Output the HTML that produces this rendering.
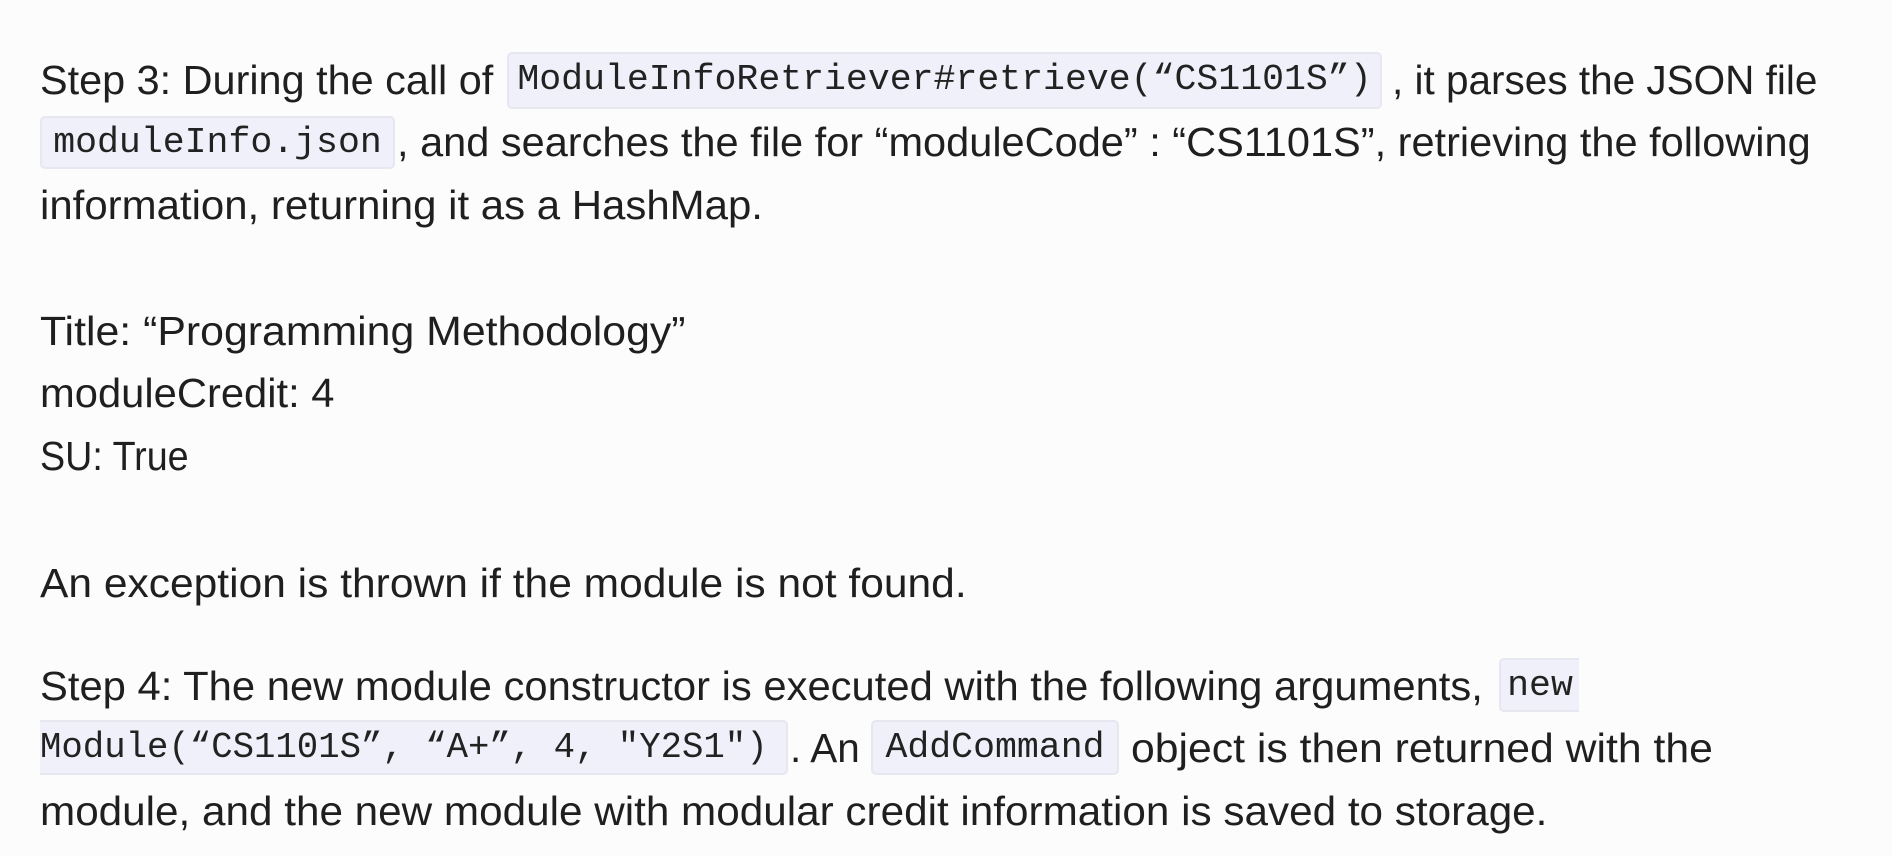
<!DOCTYPE html>
<html><head><meta charset="utf-8"><style>
html,body{margin:0;padding:0;background:#fcfcfd;width:1892px;height:856px;overflow:hidden}
body{font-family:"Liberation Sans","DejaVu Sans",sans-serif;font-size:40.5px;color:#1f1f1f;position:relative}
.l{position:absolute;left:40px;white-space:nowrap;line-height:44px;height:44px;transform-origin:0 50%}
.c{position:absolute;background:#eff0fa;border:2px solid #e6e7ef;border-radius:5px;font-family:"Liberation Mono","DejaVu Sans Mono",monospace;font-size:36.5px;line-height:52px;white-space:nowrap;box-sizing:border-box;text-align:center;color:#222}
.t{position:absolute;white-space:nowrap;line-height:44px;transform-origin:0 50%}
</style></head><body>
<div class="t" style="left:40px;top:58px;transform:scaleX(1.022)">Step 3: During the call of</div>
<div class="c" style="left:507px;top:52px;width:875px;height:57px">ModuleInfoRetriever#retrieve(“CS1101S”)</div>
<div class="t" style="left:1392px;top:58px">, it parses the JSON file</div>

<div class="c" style="left:40px;top:116px;width:355px;height:53px;line-height:49px">moduleInfo.json</div>
<div class="t" style="left:397px;top:120px;transform:scaleX(1.025)">, and searches the file for “moduleCode” : “CS1101S”, retrieving the following</div>

<div class="l" style="top:183px;transform:scaleX(1.036)">information, returning it as a HashMap.</div>

<div class="l" style="top:309px;transform:scaleX(1.057)">Title: “Programming Methodology”</div>
<div class="l" style="top:371px;transform:scaleX(1.03)">moduleCredit: 4</div>
<div class="l" style="top:434px;transform:scaleX(0.93)">SU: True</div>

<div class="l" style="top:561px;transform:scaleX(1.05)">An exception is thrown if the module is not found.</div>

<div class="t" style="left:40px;top:664px;transform:scaleX(1.031)">Step 4: The new module constructor is executed with the following arguments,</div>
<div class="c" style="left:1499px;top:658px;width:80px;height:54px;border-right:none;border-radius:5px 0 0 5px">new</div>
<div class="c" style="left:40px;top:720px;width:748px;height:55px;border-left:none;border-radius:0 5px 5px 0;text-align:left;padding-left:0"><span style="display:inline-block;transform:scaleX(0.977);transform-origin:0 50%">Module(“CS1101S”, “A+”, 4, "Y2S1")</span></div>
<div class="t" style="left:790px;top:726px">. An</div>
<div class="c" style="left:871px;top:720px;width:248px;height:55px">AddCommand</div>
<div class="t" style="left:1131px;top:726px;transform:scaleX(1.055)">object is then returned with the</div>
<div class="l" style="top:789px;transform:scaleX(1.043)">module, and the new module with modular credit information is saved to storage.</div>
</body></html>
